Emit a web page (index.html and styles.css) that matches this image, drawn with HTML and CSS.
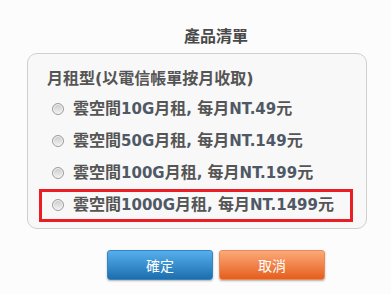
FILE: index.html
```html
<!DOCTYPE html>
<html lang="zh-Hant">
<head>
<meta charset="utf-8">
<title>產品清單</title>
<link rel="stylesheet" href="styles.css">
</head>
<body>
<div class="page">
  <h1 class="title">產品清單</h1>
  <div class="panel">
    <div class="panel-heading">月租型(以電信帳單按月收取)</div>
    <ul class="options">
      <li class="option"><span class="radio"></span><span class="label">雲空間<span class="latin">10G</span>月租<span class="latin">, </span>每月<span class="latin">NT.49</span>元</span></li>
      <li class="option"><span class="radio"></span><span class="label">雲空間<span class="latin">50G</span>月租<span class="latin">, </span>每月<span class="latin">NT.149</span>元</span></li>
      <li class="option"><span class="radio"></span><span class="label">雲空間<span class="latin">100G</span>月租<span class="latin">, </span>每月<span class="latin">NT.199</span>元</span></li>
      <li class="option highlighted"><span class="radio"></span><span class="label">雲空間<span class="latin">1000G</span>月租<span class="latin">, </span>每月<span class="latin">NT.1499</span>元</span></li>
    </ul>
  </div>
  <div class="actions">
    <button class="btn btn-confirm" type="button">確定</button>
    <button class="btn btn-cancel" type="button">取消</button>
  </div>
</div>
</body>
</html>
```
FILE: styles.css
```css
html, body {
  margin: 0;
  padding: 0;
  background: #fcfcfc;
}
body {
  font-family: "DejaVu Sans", "Noto Sans CJK TC", sans-serif;
  color: #555;
}
.page {
  width: 391px;
  height: 294px;
  box-sizing: border-box;
  padding-top: 27px;
}
.title {
  margin: 0;
  padding-left: 41px;
  text-align: center;
  font-size: 16px;
  line-height: 20px;
  font-weight: 700;
  color: #4a4a4a;
}
.panel {
  margin: 6px 0 0 27px;
  width: 340px;
  box-sizing: border-box;
  border: 1px solid #cfcfcf;
  border-radius: 10px;
  background: #f8f8f8;
  padding: 13px 0 9px 19px;
}
.panel-heading {
  font-size: 16px;
  line-height: 24px;
  font-weight: 700;
  color: #555;
}
.options {
  list-style: none;
  margin: 0;
  padding: 0;
}
.option {
  position: relative;
  display: flex;
  align-items: center;
  height: 32px;
  padding-left: 5px;
  gap: 9px;
  font-size: 16px;
  font-weight: 700;
  color: #555;
}
.latin {
  font-size: 15px;
  color: #4f5966;
}
.radio {
  width: 12px;
  height: 12px;
  box-sizing: border-box;
  border-radius: 50%;
  border: 1px solid #9c9c9c;
  background: linear-gradient(#c9c9c9, #f3f3f3);
  box-shadow: inset 0 0 0 1px #f5f5f5;
  margin-top: 4px;
  flex: none;
}
.label {
  white-space: nowrap;
}
.highlighted::after {
  content: "";
  position: absolute;
  left: -8px;
  top: 2px;
  width: 314px;
  height: 33px;
  box-sizing: border-box;
  border: 3px solid #ea1c24;
}
.actions {
  display: flex;
  justify-content: center;
  gap: 6px;
  padding-left: 41px;
  margin-top: 21px;
}
.btn {
  width: 106px;
  height: 30px;
  border-radius: 3px;
  font-family: "Noto Sans CJK TC", sans-serif;
  font-size: 14px;
  color: #fff;
  padding: 0;
  box-shadow: 0 1px 2px rgba(0, 0, 0, 0.3);
  cursor: pointer;
}
.btn-confirm {
  border: 1px solid #3585c4;
  background: linear-gradient(#56afec, #1c6ead);
}
.btn-cancel {
  border: 1px solid #ec8a55;
  background: linear-gradient(#fca978, #e55e1d);
}
```
